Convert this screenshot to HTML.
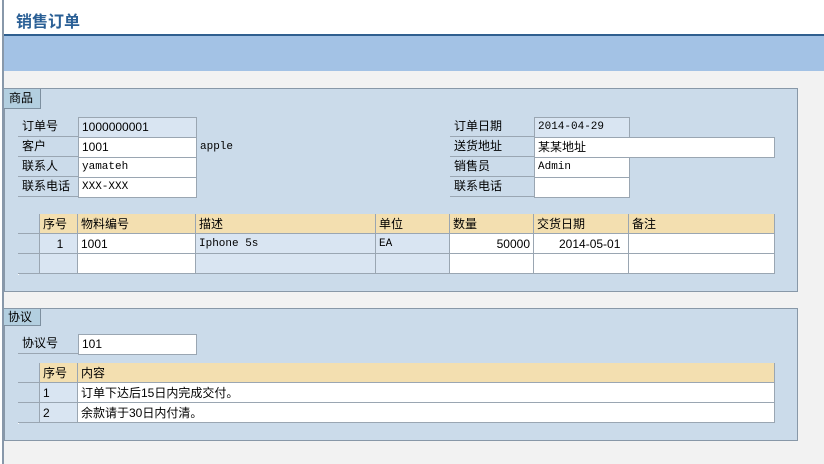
<!DOCTYPE html><html><head><meta charset="utf-8"><style>
*{margin:0;padding:0;box-sizing:border-box}
body{width:824px;height:464px;overflow:hidden;background:#f2f2f2;position:relative;font-family:"Liberation Sans","Noto Sans CJK SC",sans-serif;font-size:12px;color:#000}
.a{position:absolute}
.l{position:absolute;border-bottom:1px solid #9aa6b2;padding-left:4px;line-height:19px;height:20px}
.v{position:absolute;background:#fff;border:1px solid #9aa6b2;padding-left:3px;line-height:19px;height:21px}
.m{font-family:"Liberation Mono","Noto Sans CJK SC",monospace;font-size:11px}
.c{position:absolute;border-right:1px solid #9aa6b2;border-bottom:1px solid #9aa6b2;height:20px;line-height:20px;padding-left:3px;white-space:nowrap}
.h{background:#f3dfb0}.w{background:#fff}.b{background:#d9e5f2}.g{background:#cbdbea}
</style></head><body>
<div class="a" style="left:0;top:0;width:824px;height:35px;background:#fff"></div>
<div class="a" style="left:16px;top:8px;color:#2a5f95;font-size:16px;font-weight:bold">销售订单</div>
<div class="a" style="left:4px;top:34px;width:820px;height:2px;background:#2f5f8f"></div>
<div class="a" style="left:4px;top:36px;width:820px;height:35px;background:#a3c2e5"></div>
<div class="a" style="left:0;top:0;width:4px;height:464px;background:#fff;border-right:2px solid #8898aa"></div>

<div class="a g" style="left:4px;top:88px;width:794px;height:204px;border:1px solid #8898a8"></div>
<div class="a" style="left:4px;top:89px;width:37px;height:20px;background:#b3cfe0;border-right:1px solid #7d8f9f;border-bottom:1px solid #7d8f9f;padding-left:5px;line-height:19px">商品</div>

<div class="l" style="left:18px;top:117px;width:60px">订单号</div><div class="v b" style="left:78px;top:117px;width:119px">1000000001</div>
<div class="l" style="left:18px;top:137px;width:60px">客户</div><div class="v" style="left:78px;top:137px;width:119px">1001</div>
<div class="a m" style="left:200px;top:141px">apple</div>
<div class="l" style="left:18px;top:157px;width:60px">联系人</div><div class="v m" style="left:78px;top:157px;width:119px">yamateh</div>
<div class="l" style="left:18px;top:177px;width:60px">联系电话</div><div class="v m" style="left:78px;top:177px;width:119px">XXX-XXX</div>

<div class="l" style="left:450px;top:117px;width:84px">订单日期</div><div class="v b m" style="left:534px;top:117px;width:96px">2014-04-29</div>
<div class="l" style="left:450px;top:137px;width:84px">送货地址</div><div class="v" style="left:534px;top:137px;width:241px">某某地址</div>
<div class="l" style="left:450px;top:157px;width:84px">销售员</div><div class="v m" style="left:534px;top:157px;width:96px">Admin</div>
<div class="l" style="left:450px;top:177px;width:84px">联系电话</div><div class="v" style="left:534px;top:177px;width:96px"></div>

<div class="a" style="left:18px;top:214px;width:757px;height:61px;border-left:1px solid #fff;border-top:1px solid #fff"></div>
<div class="c g" style="left:18px;top:214px;width:22px"></div>
<div class="c h" style="left:40px;top:214px;width:38px">序号</div>
<div class="c h" style="left:78px;top:214px;width:118px">物料编号</div>
<div class="c h" style="left:196px;top:214px;width:180px">描述</div>
<div class="c h" style="left:376px;top:214px;width:74px">单位</div>
<div class="c h" style="left:450px;top:214px;width:84px">数量</div>
<div class="c h" style="left:534px;top:214px;width:95px">交货日期</div>
<div class="c h" style="left:629px;top:214px;width:146px">备注</div>
<div class="c g" style="left:18px;top:234px;width:22px"></div>
<div class="c b" style="left:40px;top:234px;width:38px;text-align:center">1</div>
<div class="c w" style="left:78px;top:234px;width:118px">1001</div>
<div class="c b m" style="left:196px;top:234px;width:180px">Iphone 5s</div>
<div class="c b m" style="left:376px;top:234px;width:74px">EA</div>
<div class="c w" style="left:450px;top:234px;width:84px;text-align:right;padding-right:3px">50000</div>
<div class="c w" style="left:534px;top:234px;width:95px;padding-left:25px">2014-05-01</div>
<div class="c w" style="left:629px;top:234px;width:146px"></div>
<div class="c g" style="left:18px;top:254px;width:22px"></div>
<div class="c b" style="left:40px;top:254px;width:38px"></div>
<div class="c w" style="left:78px;top:254px;width:118px"></div>
<div class="c b" style="left:196px;top:254px;width:180px"></div>
<div class="c b" style="left:376px;top:254px;width:74px"></div>
<div class="c w" style="left:450px;top:254px;width:84px"></div>
<div class="c w" style="left:534px;top:254px;width:95px"></div>
<div class="c w" style="left:629px;top:254px;width:146px"></div>

<div class="a g" style="left:4px;top:308px;width:794px;height:133px;border:1px solid #8898a8"></div>
<div class="a" style="left:4px;top:309px;width:37px;height:17px;background:#b3cfe0;border-right:1px solid #7d8f9f;border-bottom:1px solid #7d8f9f;padding-left:4px;line-height:16px">协议</div>
<div class="l" style="left:18px;top:334px;width:60px">协议号</div><div class="v" style="left:78px;top:334px;width:119px">101</div>

<div class="a" style="left:18px;top:363px;width:757px;height:61px;border-left:1px solid #fff;border-top:1px solid #fff"></div>
<div class="c g" style="left:18px;top:363px;width:22px"></div>
<div class="c h" style="left:40px;top:363px;width:38px">序号</div>
<div class="c h" style="left:78px;top:363px;width:697px">内容</div>
<div class="c g" style="left:18px;top:383px;width:22px"></div>
<div class="c b" style="left:40px;top:383px;width:38px">1</div>
<div class="c w" style="left:78px;top:383px;width:697px">订单下达后15日内完成交付。</div>
<div class="c g" style="left:18px;top:403px;width:22px"></div>
<div class="c b" style="left:40px;top:403px;width:38px">2</div>
<div class="c w" style="left:78px;top:403px;width:697px">余款请于30日内付清。</div>
</body></html>
